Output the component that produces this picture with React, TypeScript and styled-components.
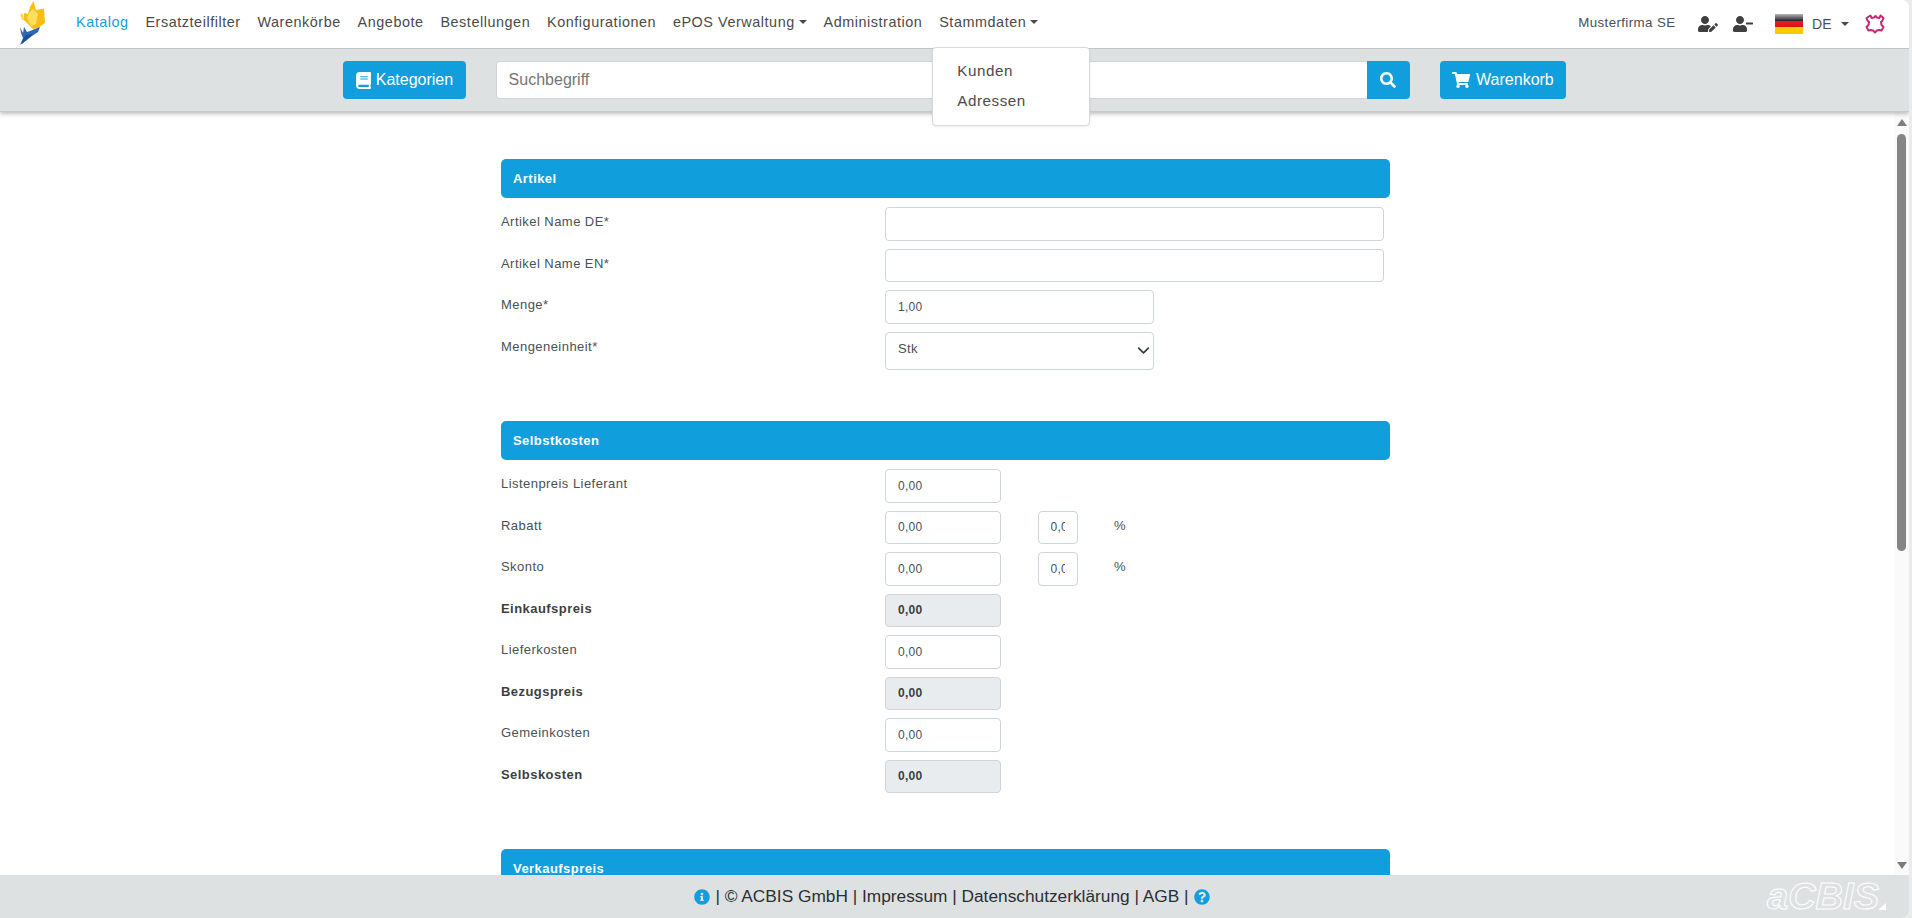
import styled, { createGlobalStyle } from 'styled-components'
import {
  FaBook,
  FaInfoCircle,
  FaQuestionCircle,
  FaSearch,
  FaShoppingCart,
  FaUserEdit,
  FaUserMinus,
} from 'react-icons/fa'

const BLUE = '#109fdc'
const GREY = '#dee1e2'

const GlobalStyle = createGlobalStyle`
  * { box-sizing: border-box; }
  html, body { margin: 0; height: 100%; background: #ebebeb; overflow: hidden; }
  #root { height: 100%; }
  body { font-family: "Liberation Sans", Arial, sans-serif; color: #495057; }
`

const navItems = [
  { label: 'Katalog', active: true },
  { label: 'Ersatzteilfilter' },
  { label: 'Warenkörbe' },
  { label: 'Angebote' },
  { label: 'Bestellungen' },
  { label: 'Konfigurationen' },
  { label: 'ePOS Verwaltung', caret: true },
  { label: 'Administration' },
  { label: 'Stammdaten', caret: true, open: true },
]

function FlameLogo() {
  return (
    <svg width="30" height="46" viewBox="0 0 30 46">
      <path d="M17.500 1L20 10l8-1.500L29 23l-7 5-5 1-9-9v-7l4 1 2-7z" fill="#f9bd18" />
      <path d="M17 9l5 5-2 10-5 2-4-8 2-5z" fill="#ffe05a" />
      <path d="M4 15l3-2 1 7H6z" fill="#fbd65a" />
      <path d="M4 27l3 6 1-6 3 5 3-1 10-4-2 5-6 4-5 4-7 5 3-7-2-5z" fill="#2f68ae" />
      <path d="M10 35l7-1-6 5-5 5 1-5z" fill="#1d4f98" />
    </svg>
  )
}

function HideIcon() {
  return (
    <svg width="21" height="20" viewBox="0 0 21 20" fill="none" stroke="#c4296f" strokeWidth="2" strokeLinejoin="round">
      <path d="M5.500 1.500l1 2.500 2.500-.5 1.500-1.500 1.500 1.500 2.500.5 1-2.500 3 2.500-1 2.500-1.500 1.500.5 3 2 2-2 3.500-2.500-.5-2 .5-2 2-2-2-2-.5-2.500.5-2-3.500 2-2 .5-3-1.500-1.500-1-2.500z" />
    </svg>
  )
}

// outlined word mark, kept as live text with a stroke only
function AcbisLogo() {
  return (
    <svg width="122" height="43" viewBox="0 0 122 43">
      <text
        x="2"
        y="34"
        textLength="112"
        lengthAdjust="spacingAndGlyphs"
        fontFamily="'Liberation Sans', Arial, sans-serif"
        fontStyle="italic"
        fontWeight="700"
        fontSize="36"
        fill="none"
        stroke="#ffffff"
        strokeWidth="1"
      >
        aCBIS
      </text>
      <path d="M113 35h8v-7z" fill="#fff" />
    </svg>
  )
}

type Row = {
  label: string
  value?: string
  size: 'full' | 'half' | 'price'
  bold?: boolean
  pct?: boolean
  select?: boolean
}

const sections: { title: string; rows: Row[]; tail: number }[] = [
  {
    title: 'Artikel',
    tail: 43,
    rows: [
      { label: 'Artikel Name DE*', size: 'full' },
      { label: 'Artikel Name EN*', size: 'full' },
      { label: 'Menge*', value: '1,00', size: 'half' },
      { label: 'Mengeneinheit*', value: 'Stk', size: 'half', select: true },
    ],
  },
  {
    title: 'Selbstkosten',
    tail: 48,
    rows: [
      { label: 'Listenpreis Lieferant', value: '0,00', size: 'price' },
      { label: 'Rabatt', value: '0,00', size: 'price', pct: true },
      { label: 'Skonto', value: '0,00', size: 'price', pct: true },
      { label: 'Einkaufspreis', value: '0,00', size: 'price', bold: true },
      { label: 'Lieferkosten', value: '0,00', size: 'price' },
      { label: 'Bezugspreis', value: '0,00', size: 'price', bold: true },
      { label: 'Gemeinkosten', value: '0,00', size: 'price' },
      { label: 'Selbskosten', value: '0,00', size: 'price', bold: true },
    ],
  },
  { title: 'Verkaufspreis', tail: 0, rows: [] },
]

export default function App() {
  return (
    <>
      <GlobalStyle />
      <Page>
        <Header>
          <LogoBox>
            <FlameLogo />
          </LogoBox>
          <Nav>
            {navItems.map((item) => (
              <NavItem key={item.label} $active={item.active}>
                {item.label}
                {item.caret && <Caret />}
                {item.open && (
                  <Menu>
                    <MenuItem>Kunden</MenuItem>
                    <MenuItem>Adressen</MenuItem>
                  </Menu>
                )}
              </NavItem>
            ))}
          </Nav>
          <UserArea>
            <Company>Musterfirma SE</Company>
            <UserIcons>
              <FaUserEdit size={20} />
              <FaUserMinus size={20} />
            </UserIcons>
            <Flag />
            <Lang>
              DE
              <LangCaret />
            </Lang>
            <HideIcon />
          </UserArea>
        </Header>

        <SearchBar>
          <BlueButton $gap={3.5}>
            <FaBook size={17} />
            Kategorien
          </BlueButton>
          <SearchGroup>
            <SearchInput placeholder="Suchbegriff" />
            <SearchButton aria-label="Suchen">
              <FaSearch size={16} />
            </SearchButton>
          </SearchGroup>
          <BlueButton $gap={6}>
            <FaShoppingCart size={18} />
            Warenkorb
          </BlueButton>
        </SearchBar>

        <Body>
          <Main>
            <Form>
              {sections.map((section) => (
                <Section key={section.title} $tail={section.tail}>
                  <SectionTitle>{section.title}</SectionTitle>
                  {section.rows.map((row) => (
                    <FormRow key={row.label}>
                      <Label $bold={row.bold}>{row.label}</Label>
                      {row.select ? (
                        <Select $size={row.size} defaultValue={row.value}>
                          <option>{row.value}</option>
                        </Select>
                      ) : (
                        <Field $size={row.size} $bold={row.bold} readOnly={row.bold} defaultValue={row.value} />
                      )}
                      {row.pct && (
                        <>
                          <SmallField defaultValue="0,00" />
                          <Percent>%</Percent>
                        </>
                      )}
                    </FormRow>
                  ))}
                </Section>
              ))}
            </Form>
          </Main>
          <Scrollbar>
            <ArrowUp />
            <Thumb />
            <ArrowDown />
          </Scrollbar>
        </Body>

        <Footer>
          <FooterText>
            <FaInfoCircle size={16} color={BLUE} />
            <span>| © ACBIS GmbH | Impressum | Datenschutzerklärung | AGB |</span>
            <FaQuestionCircle size={16} color={BLUE} />
          </FooterText>
          <FooterLogo>
            <AcbisLogo />
          </FooterLogo>
        </Footer>
      </Page>
    </>
  )
}

const Page = styled.div`
  width: calc(100% - 3px);
  height: 100%;
  display: flex;
  flex-direction: column;
  background: #fff;
  border-radius: 0 8px 8px 0;
  overflow: hidden;
`

const Header = styled.header`
  height: 49px;
  flex: none;
  display: flex;
  align-items: center;
  background: #fff;
  border-bottom: 1px solid #c2c4c6;
  position: relative;
  z-index: 3;
`

const LogoBox = styled.div`
  width: 76px;
  height: 48px;
  padding-left: 16px;
  flex: none;
`

const Nav = styled.nav`
  display: flex;
  align-items: center;
  gap: 16.8px;
  font-size: 14.4px;
  letter-spacing: 0.55px;
  padding-bottom: 5px;
`

const NavItem = styled.div<{ $active?: boolean }>`
  position: relative;
  display: flex;
  align-items: center;
  white-space: nowrap;
  color: ${(p) => (p.$active ? BLUE : '#4a4a4a')};
`

const Caret = styled.span`
  margin-left: 4px;
  border-top: 4px solid #4a4a4a;
  border-left: 4px solid transparent;
  border-right: 4px solid transparent;
`

const Menu = styled.div`
  position: absolute;
  top: 33px;
  left: -7px;
  width: 158px;
  height: 79px;
  padding: 8px 0;
  background: #fff;
  border: 1px solid #d6d8da;
  border-radius: 4px;
  box-shadow: 0 1px 3px rgba(0, 0, 0, 0.08);
`

const MenuItem = styled.div`
  padding: 0 24px;
  height: 30px;
  line-height: 30px;
  font-size: 15.2px;
  color: #4a4a4a;
`

const UserArea = styled.div`
  margin-left: auto;
  display: flex;
  align-items: center;
  padding-right: 23px;
  color: #495057;
`

const Company = styled.span`
  font-size: 13.3px;
  letter-spacing: 0.4px;
  margin-right: 23px;
  padding-bottom: 3px;
`

const UserIcons = styled.div`
  display: flex;
  gap: 14.5px;
  color: #3f3f3f;
  margin-right: 22px;
`

const Flag = styled.div`
  width: 28px;
  height: 20px;
  background: linear-gradient(
    #b5b5b5 0,
    #2a2a2a 33%,
    #ec1c24 33%,
    #e0101a 66%,
    #ffce00 66%,
    #f8c800 100%
  );
`

const Lang = styled.div`
  display: flex;
  align-items: center;
  font-size: 14px;
  letter-spacing: 0.3px;
  margin: 0 16px 0 9px;
  padding-bottom: 1px;
`

const LangCaret = styled(Caret)`
  margin-left: 9px;
`

const SearchBar = styled.div`
  height: 63px;
  flex: none;
  display: flex;
  align-items: center;
  justify-content: center;
  gap: 30px;
  background: ${GREY};
  border-bottom: 1px solid #c6c8ca;
  box-shadow: 0 2px 4px rgba(0, 0, 0, 0.25);
  position: relative;
  z-index: 2;
`

const BlueButton = styled.button<{ $gap: number }>`
  height: 38px;
  padding: 0 12.500px;
  display: flex;
  align-items: center;
  gap: ${(p) => p.$gap}px;
  border: 0;
  border-radius: 4px;
  background: ${BLUE};
  color: #fff;
  font-family: inherit;
  font-size: 16px;
`

const SearchGroup = styled.div`
  width: 914px;
  height: 38px;
  display: flex;
`

const SearchInput = styled.input`
  flex: 1;
  min-width: 0;
  padding: 0 12px;
  border: 1px solid #ced4da;
  border-right: 0;
  border-radius: 4px 0 0 4px;
  font-family: inherit;
  font-size: 16px;

  ::placeholder {
    color: #6c757d;
    opacity: 1;
  }
`

const SearchButton = styled.button`
  width: 43px;
  display: flex;
  align-items: center;
  justify-content: center;
  border: 0;
  border-radius: 0 4px 4px 0;
  background: ${BLUE};
  color: #fff;
`

const Body = styled.div`
  flex: 1;
  min-height: 0;
  display: flex;
`

const Main = styled.main`
  flex: 1;
  min-width: 0;
  overflow: hidden;
  padding: 47px 0 0 501px;
`

const Form = styled.div`
  width: 889px;
`

const Section = styled.section<{ $tail: number }>`
  padding-bottom: ${(p) => p.$tail}px;
`

const SectionTitle = styled.h2`
  margin: 0 0 9px;
  height: 39px;
  padding-left: 12px;
  display: flex;
  align-items: center;
  background: ${BLUE};
  border-radius: 5px;
  color: #fff;
  font-size: 13px;
  font-weight: 700;
  letter-spacing: 0.45px;
`

const FormRow = styled.div`
  display: flex;
  align-items: flex-start;
  margin-bottom: 8px;
`

const Label = styled.label<{ $bold?: boolean }>`
  width: 384px;
  flex: none;
  padding-top: 6px;
  font-size: 13px;
  line-height: 18px;
  letter-spacing: 0.45px;
  font-weight: ${(p) => (p.$bold ? 700 : 400)};
  color: ${(p) => (p.$bold ? '#3f3f3f' : '#495057')};
`

const widths = { full: 499, half: 269, price: 115.5 }

const Field = styled.input<{ $size: keyof typeof widths; $bold?: boolean }>`
  width: ${(p) => widths[p.$size]}px;
  height: 33.5px;
  padding: 0 12px;
  border: 1px solid #ced4da;
  border-radius: 4px;
  font-family: inherit;
  font-size: 12px;
  letter-spacing: 0.3px;
  outline: none;
  color: ${(p) => (p.$bold ? '#3a3f44' : '#495057')};
  font-weight: ${(p) => (p.$bold ? 700 : 400)};
  background: ${(p) => (p.$bold ? '#e9ecef' : '#fff')};
`

const Select = styled.select<{ $size: keyof typeof widths }>`
  appearance: none;
  width: ${(p) => widths[p.$size]}px;
  height: 38.5px;
  padding: 0 12px 5px;
  border: 1px solid #ced4da;
  border-radius: 4px;
  font-family: inherit;
  font-size: 13px;
  letter-spacing: 0.3px;
  color: #495057;
  background: #fff url("data:image/svg+xml,%3csvg xmlns='http://www.w3.org/2000/svg' viewBox='0 0 16 16'%3e%3cpath fill='none' stroke='%23343a40' stroke-linecap='round' stroke-linejoin='round' stroke-width='2' d='M2 5l6 6 6-6'/%3e%3c/svg%3e") no-repeat right 2px center / 15px 13px;
`

const SmallField = styled.input`
  width: 40px;
  height: 33.5px;
  margin-left: 37px;
  padding: 0 12px;
  border: 1px solid #ced4da;
  border-radius: 4px;
  font-family: inherit;
  font-size: 12px;
  letter-spacing: 0.3px;
  color: #495057;
`

const Percent = styled.span`
  margin-left: 36.5px;
  padding-top: 6px;
  font-size: 13px;
  line-height: 18px;
`

const Scrollbar = styled.div`
  width: 15px;
  flex: none;
  display: flex;
  flex-direction: column;
  align-items: center;
  padding: 7px 0 6px;
  background: #fafafa;
`

const ArrowUp = styled.span`
  border-bottom: 7px solid #7d7d7d;
  border-left: 5px solid transparent;
  border-right: 5px solid transparent;
`

const ArrowDown = styled.span`
  margin-top: auto;
  border-top: 7px solid #7d7d7d;
  border-left: 5px solid transparent;
  border-right: 5px solid transparent;
`

const Thumb = styled.div`
  width: 9px;
  height: 417px;
  margin-top: 8px;
  background: #858585;
  border-radius: 5px;
`

const Footer = styled.footer`
  height: 43px;
  flex: none;
  display: grid;
  grid-template-columns: 1fr auto 1fr;
  align-items: center;
  background: ${GREY};
`

const FooterText = styled.div`
  grid-column: 2;
  display: flex;
  align-items: center;
  gap: 5px;
  margin-right: 5px;
  font-size: 17.3px;
  color: #2b2f33;
`

const FooterLogo = styled.div`
  justify-self: end;
  display: flex;
  margin-right: 22px;
`
